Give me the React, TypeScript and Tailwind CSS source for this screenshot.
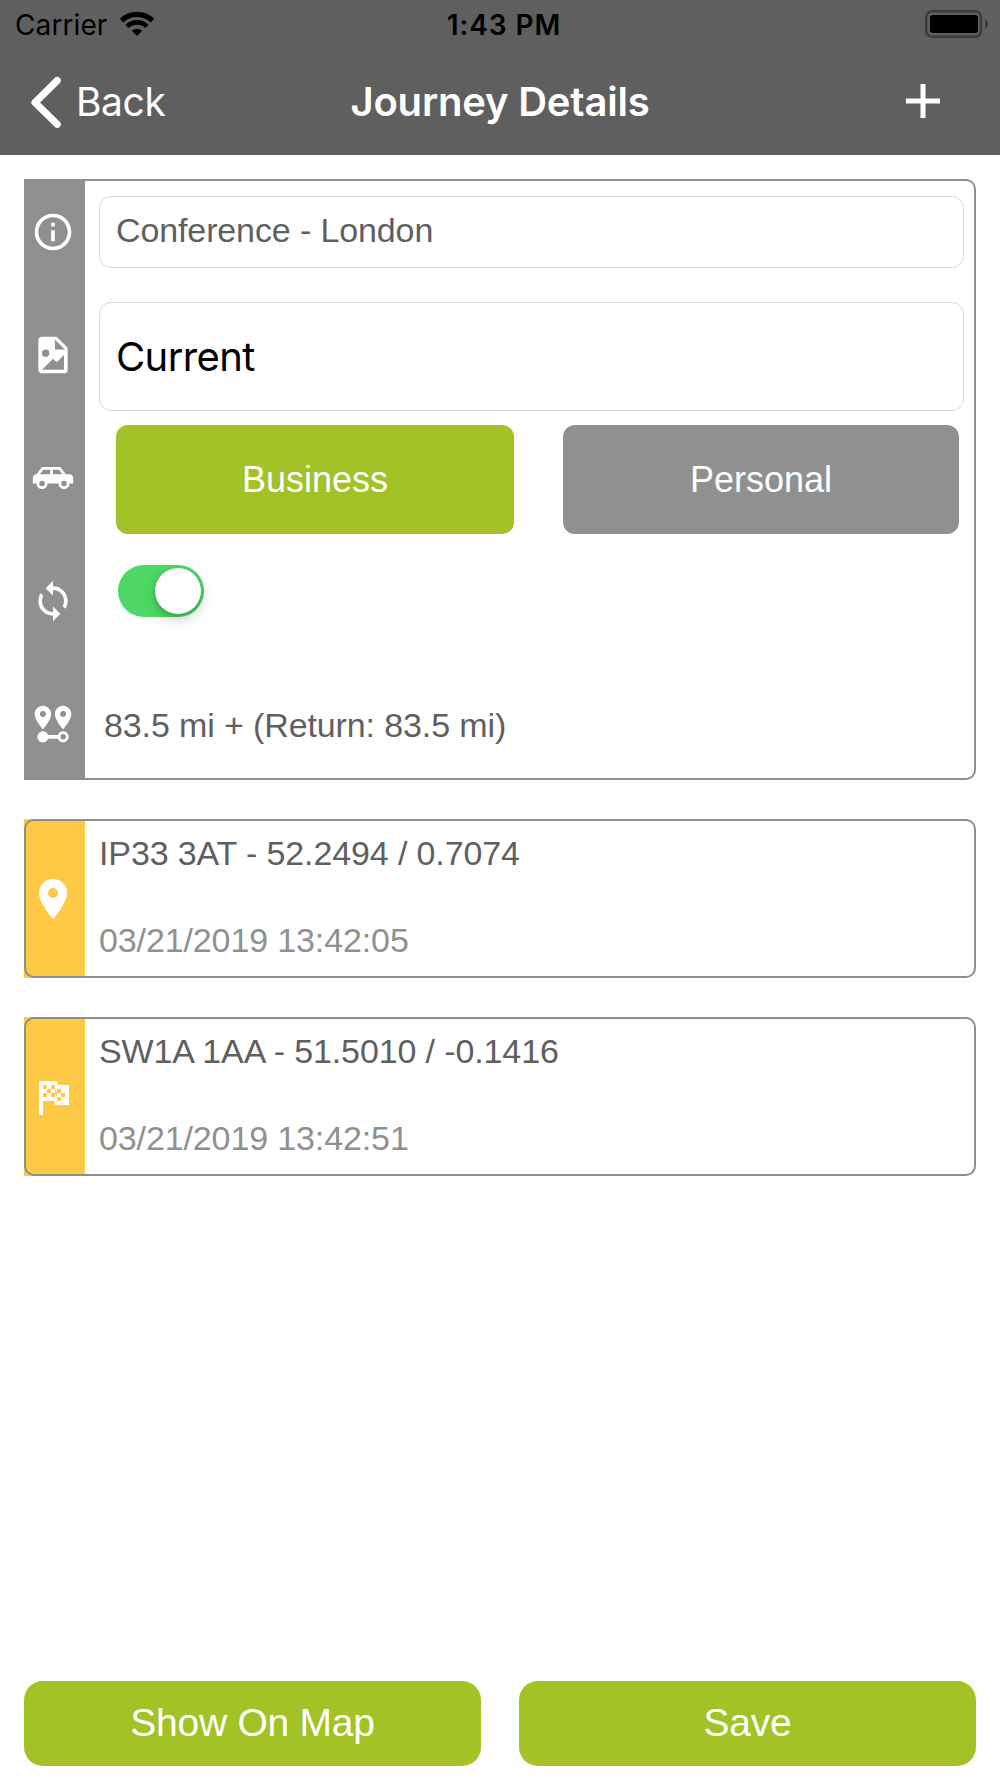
// ============================================================================
// Journey Details Screen
// ============================================================================

import { useState } from 'react';
import type { ReactNode } from 'react';

const icons = {
  info: 'M11,9H13V7H11M12,20C7.59,20 4,16.41 4,12C4,7.59 7.59,4 12,4C16.41,4 20,7.59 20,12C20,16.41 16.41,20 12,20M12,2A10,10 0 0,0 2,12A10,10 0 0,0 12,22A10,10 0 0,0 22,12A10,10 0 0,0 12,2M11,17H13V11H11V17Z',
  fileImage:
    'M13,9H18.5L13,3.5V9M6,2H14L20,8V20A2,2 0 0,1 18,22H6C4.89,22 4,21.1 4,20V4C4,2.89 4.89,2 6,2M6,20H15L18,20V12L14,16L12,14L6,20M8,9A2,2 0 0,0 6,11A2,2 0 0,0 8,13A2,2 0 0,0 10,11A2,2 0 0,0 8,9Z',
  car: 'M16,6L19,10H21C22.11,10 23,10.89 23,12V15H21A3,3 0 0,1 18,18A3,3 0 0,1 15,15H9A3,3 0 0,1 6,18A3,3 0 0,1 3,15H1V12C1,10.89 1.89,10 3,10L6,6H16M10.5,7.5H6.75L4.86,10H10.5V7.5M12,7.5V10H17.14L15.25,7.5H12M6,13.5A1.5,1.5 0 0,0 4.5,15A1.5,1.5 0 0,0 6,16.5A1.5,1.5 0 0,0 7.5,15A1.5,1.5 0 0,0 6,13.5M18,13.5A1.5,1.5 0 0,0 16.5,15A1.5,1.5 0 0,0 18,16.5A1.5,1.5 0 0,0 19.5,15A1.5,1.5 0 0,0 18,13.5Z',
  sync: 'M12,18A6,6 0 0,1 6,12C6,11 6.25,10.03 6.7,9.2L5.24,7.74C4.46,8.97 4,10.43 4,12A8,8 0 0,0 12,20V23L16,19L12,15M12,4V1L8,5L12,9V6A6,6 0 0,1 18,12C18,13 17.75,13.97 17.3,14.8L18.76,16.26C19.54,15.03 20,13.57 20,12A8,8 0 0,0 12,4Z',
  distance:
    'M6.5,8.11A1.61,1.61 0 0,1 4.89,6.5A1.61,1.61 0 0,1 6.5,4.89A1.61,1.61 0 0,1 8.11,6.5A1.61,1.61 0 0,1 6.5,8.11M6.5,2C4,2 2,4 2,6.5C2,9.87 6.5,14.86 6.5,14.86C6.5,14.86 11,9.87 11,6.5C11,4 9,2 6.5,2M17.5,8.11A1.61,1.61 0 0,1 15.89,6.5A1.61,1.61 0 0,1 17.5,4.89A1.61,1.61 0 0,1 19.11,6.5A1.61,1.61 0 0,1 17.5,8.11M17.5,2C15,2 13,4 13,6.5C13,9.87 17.5,14.86 17.5,14.86C17.5,14.86 22,9.87 22,6.5C22,4 20,2 17.5,2M17.5,16C16.23,16 15.1,16.8 14.68,18H9.32C8.77,16.44 7.05,15.62 5.5,16.17C3.93,16.72 3.11,18.44 3.66,20C4.22,21.56 5.93,22.38 7.5,21.83C8.35,21.53 9,20.85 9.32,20H14.69C15.24,21.56 16.96,22.38 18.5,21.83C20.08,21.28 20.9,19.56 20.35,18C19.92,16.8 18.78,16 17.5,16M17.5,20.5A1.5,1.5 0 0,1 16,19A1.5,1.5 0 0,1 17.5,17.5A1.5,1.5 0 0,1 19,19A1.5,1.5 0 0,1 17.5,20.5Z',
  marker:
    'M12,11.5A2.5,2.5 0 0,1 9.5,9A2.5,2.5 0 0,1 12,6.5A2.5,2.5 0 0,1 14.5,9A2.5,2.5 0 0,1 12,11.5M12,2A7,7 0 0,0 5,9C5,14.25 12,22 12,22C12,22 19,14.25 19,9A7,7 0 0,0 12,2Z',
  flag: 'M14.4,6H20V16H13L12.6,14H7V21H5V4H14L14.4,6M14,14H16V12H18V10H16V8H14V10L13,8V6H11V8H9V6H7V8H9V10H7V12H9V10H11V12H13V10L14,12V14M11,10V8H13V10H11M14,10H16V12H14V10Z',
};

type IconName = keyof typeof icons;

function Icon({ name, className }: { name: IconName; className: string }) {
  return (
    <svg viewBox="0 0 24 24" fill="white" className={className}>
      <path d={icons[name]} />
    </svg>
  );
}

// ============================================================================
// Header
// ============================================================================

function StatusBar() {
  return (
    <div className="grid h-[50px] grid-cols-[1fr_auto_1fr] items-center text-black">
      <div className="flex items-center pl-[15px]">
        <span className="text-[28px] leading-[50px] tracking-[0.1px]">Carrier</span>
        <svg width="36" height="26" viewBox="0 0 36 26" className="mb-[2px] ml-[12px]">
          <g fill="none" stroke="black">
            <path d="M2.6 9.6A22 22 0 0 1 33.4 9.6" strokeWidth="5.2" />
            <path d="M8 15.4A14.4 14.4 0 0 1 28 15.4" strokeWidth="4.6" />
          </g>
          <path d="M18 25L12.8 19.8A7.4 7.4 0 0 1 23.2 19.8Z" />
        </svg>
      </div>
      <span className="pl-[8px] text-[28px] font-semibold leading-[50px] tracking-[0.9px]">1:43 PM</span>
      <div className="flex justify-end pr-[11px] pb-[2px]">
        <svg width="64" height="28" viewBox="0 0 64 28">
          <rect x="1.2" y="1.2" width="54.8" height="25.6" rx="6" fill="none" stroke="#3b3b3b" strokeWidth="2.4" />
          <rect x="5" y="5" width="48" height="18" rx="3" />
          <path d="M60 9.5Q63 11 63 14T60 18.5Z" fill="#3b3b3b" />
        </svg>
      </div>
    </div>
  );
}

function NavBar() {
  return (
    <div className="grid h-[103px] grid-cols-[1fr_auto_1fr] items-center text-white">
      <button className="flex items-center pl-[30px]">
        <svg width="32" height="52" viewBox="0 0 32 52" className="mr-[14px]">
          <path
            d="M27.2 4.6L5 26.5L27.2 48.2"
            fill="none"
            stroke="white"
            strokeWidth="7.2"
            strokeLinecap="round"
            strokeLinejoin="round"
          />
        </svg>
        <span className="text-[39px] leading-[50px] tracking-[-0.4px]">Back</span>
      </button>
      <h1 className="text-[40px] font-semibold leading-[50px] tracking-[-0.2px]">Journey Details</h1>
      <button className="flex justify-end pr-[59px] pb-px">
        <svg width="36" height="36" viewBox="0 0 36 36">
          <path d="M18 1V35M1 18H35" stroke="white" strokeWidth="5" />
        </svg>
      </button>
    </div>
  );
}

// ============================================================================
// Journey Form
// ============================================================================

function FormRow({ icon, children }: { icon: IconName; children: ReactNode }) {
  return (
    <div className="flex h-[123.2px]">
      <div className="flex w-[61px] shrink-0 items-center justify-center pr-[3px]">
        <Icon name={icon} className="size-[44px]" />
      </div>
      <div className="flex-1">{children}</div>
    </div>
  );
}

function JourneyForm() {
  const [purpose, setPurpose] = useState('Business');
  const [isReturn, setIsReturn] = useState(true);

  return (
    <section className="h-[601px] rounded-r-[10px] border-2 border-l-0 border-[#8e8e8e] bg-[linear-gradient(to_right,#909090_61px,white_61px)]">
      <div className="-mt-[11px]">
        <FormRow icon="info">
          <div className="mr-[10px] ml-[14px] mt-[26px] flex h-[72px] items-center rounded-[12px] border border-[#d8d8d8] pb-[5px] pl-[16px]">
            <span className="text-[34px] leading-[40px] tracking-[-0.12px] text-[#5f5f5f]">Conference - London</span>
          </div>
        </FormRow>
        <FormRow icon="fileImage">
          <div className="mr-[10px] ml-[14px] mt-[9px] flex h-[109px] items-center rounded-[12px] border border-[#d8d8d8] pl-[16px]">
            <span className="font-[Inter,sans-serif] text-[40px] leading-[50px] tracking-[-0.6px] text-black">
              Current
            </span>
          </div>
        </FormRow>
        <FormRow icon="car">
          <div className="mr-[15px] ml-[31px] mt-[9px] flex justify-between">
            <button
              onClick={() => setPurpose('Business')}
              className={`h-[109px] w-[398px] rounded-[12px] text-[36px] text-white ${
                purpose === 'Business' ? 'bg-[#a3c226]' : 'bg-[#909090]'
              }`}
            >
              Business
            </button>
            <button
              onClick={() => setPurpose('Personal')}
              className={`h-[109px] w-[396px] rounded-[12px] text-[36px] text-white ${
                purpose === 'Personal' ? 'bg-[#a3c226]' : 'bg-[#909090]'
              }`}
            >
              Personal
            </button>
          </div>
        </FormRow>
        <FormRow icon="sync">
          <button
            role="switch"
            aria-checked={isReturn}
            onClick={() => setIsReturn(!isReturn)}
            className={`mt-[25px] ml-[33px] flex h-[52px] w-[86px] items-center rounded-full px-[3px] ${
              isReturn ? 'justify-end bg-[#4cd964]' : 'justify-start bg-[#d8d8d8]'
            }`}
          >
            <span className="size-[46px] rounded-full bg-white shadow-[0_5px_14px_rgba(0,0,0,0.2),0_2px_4px_rgba(0,0,0,0.12)]" />
          </button>
        </FormRow>
        <FormRow icon="distance">
          <p className="flex h-full items-center pt-[2px] pl-[19px] text-[34px] tracking-[-0.12px] text-[#5f5f5f]">
            83.5 mi + (Return: 83.5 mi)
          </p>
        </FormRow>
      </div>
    </section>
  );
}

// ============================================================================
// Stop Card
// ============================================================================

interface StopCardProps {
  icon: IconName;
  place: string;
  time: string;
}

function StopCard({ icon, place, time }: StopCardProps) {
  return (
    <section className="relative flex h-[159px]">
      <div className="flex w-[61px] items-center justify-center bg-[#fec944] pr-[3px]">
        <Icon name={icon} className="size-[48px]" />
      </div>
      <div className="flex flex-col gap-[47px] pt-[14px] pl-[14px] text-[34px] leading-[40px] tracking-[-0.12px]">
        <p className="text-[#5f5f5f]">{place}</p>
        <p className="text-[#909090]">{time}</p>
      </div>
      {/* Outline runs over the coloured strip */}
      <div className="pointer-events-none absolute inset-0 rounded-[10px] border-2 border-[#8e8e8e]" />
    </section>
  );
}

export default function App() {
  return (
    <div className="flex h-[1778px] w-[1000px] flex-col bg-white font-['Liberation_Sans',sans-serif]">
      <header className="h-[155px] bg-[#5f5f5f] font-[Inter,sans-serif]">
        <StatusBar />
        <NavBar />
      </header>

      <main className="flex flex-1 flex-col gap-[39px] px-[24px] pt-[24px]">
        <JourneyForm />
        <StopCard icon="marker" place="IP33 3AT - 52.2494 / 0.7074" time="03/21/2019 13:42:05" />
        <StopCard icon="flag" place="SW1A 1AA - 51.5010 / -0.1416" time="03/21/2019 13:42:51" />
      </main>

      <footer className="flex gap-[38px] px-[24px] pb-[12px] text-[39px] tracking-[-0.25px] text-white">
        <button className="h-[85px] flex-1 rounded-[19px] bg-[#a3c226]">Show On Map</button>
        <button className="h-[85px] flex-1 rounded-[19px] bg-[#a3c226]">Save</button>
      </footer>
    </div>
  );
}
